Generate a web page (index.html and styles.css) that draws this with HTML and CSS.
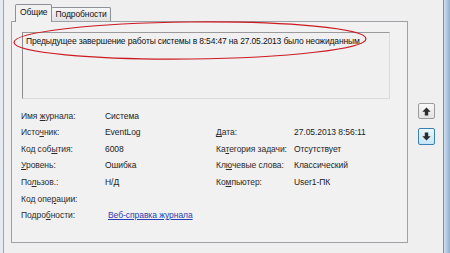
FILE: index.html
```html
<!DOCTYPE html>
<html lang="ru">
  <head>
    <meta charset="UTF-8" />
    <meta name="viewport" content="width=device-width, initial-scale=1.0" />
    <title>Свойства события</title>

    <link rel="stylesheet" href="styles.css">
  </head>
  <body>
    <div class="window">
      <div class="frame_left"></div>

      <div class="client">
        <div class="tabs_col">
          <div class="tabs">
            <span class="tab active">Общие</span>
            <span class="tab">Подробности</span>
          </div>

          <div class="panel">
            <div class="message">
              Предыдущее завершение работы системы в 8:54:47 на 27.05.2013 было неожиданным.
            </div>

            <div class="props">
              <span class="label">Имя <u>ж</u>урнала:</span>
              <span class="value">Система</span>
              <span></span>
              <span></span>

              <span class="label">Исто<u>ч</u>ник:</span>
              <span class="value">EventLog</span>
              <span class="label"><u>Д</u>ата:</span>
              <span class="value">27.05.2013 8:56:11</span>

              <span class="label">Код соб<u>ы</u>тия:</span>
              <span class="value">6008</span>
              <span class="label">Ка<u>т</u>егория задачи:</span>
              <span class="value">Отсутствует</span>

              <span class="label"><u>У</u>ровень:</span>
              <span class="value">Ошибка</span>
              <span class="label">Кл<u>ю</u>чевые слова:</span>
              <span class="value">Классический</span>

              <span class="label">По<u>л</u>ьзов.:</span>
              <span class="value">Н/Д</span>
              <span class="label">Ко<u>м</u>пьютер:</span>
              <span class="value">User1-ПК</span>

              <span class="label">Код опе<u>р</u>ации:</span>
              <span class="value"></span>
              <span></span>
              <span></span>

              <span class="label">Подро<u>б</u>ности:</span>
              <a href="#" class="value link">Веб-справка журнала</a>
              <span></span>
              <span></span>
            </div>
          </div>
        </div>

        <div class="side">
          <button class="nav_btn">
            <svg width="9" height="9" viewBox="0 0 9 9">
              <path d="M4.5 0.5 L8.7 4.8 H6.2 V8.6 H2.8 V4.8 H0.3 Z" />
            </svg>
          </button>
          <button class="nav_btn hovered">
            <svg width="9" height="9" viewBox="0 0 9 9">
              <path d="M4.5 8.5 L8.7 4.2 H6.2 V0.4 H2.8 V4.2 H0.3 Z" />
            </svg>
          </button>
        </div>
      </div>

      <div class="frame_right"></div>

      <!-- red hand-drawn mark over the message -->
      <svg class="mark" width="450" height="253" viewBox="0 0 450 253">
        <ellipse cx="190" cy="40.5" rx="176" ry="18.5" transform="rotate(-0.6 190 40.5)" />
      </svg>
    </div>
  </body>
</html>
```

FILE: styles.css
```css
* {
  margin: 0;
  padding: 0;
  box-sizing: border-box;
}

body {
  width: 450px;
  height: 253px;
  overflow: hidden;
  background-color: #efefef;
  font-family: "Liberation Sans", "DejaVu Sans", sans-serif;
  font-size: 8.5px;
  color: #222;
}

.window {
  width: 450px;
  height: 253px;
  display: flex;
  position: relative;

  .frame_left {
    width: 4px;
    background-color: #e6ebf1;
    border-right: 1px solid #9ca8b8;
  }

  .frame_right {
    width: 7px;
    border-left: 1px solid #7d8ea5;
    background: linear-gradient(to right, #cfdff0, #a9c1dc 60%, #93acca);
  }

  .mark {
    position: absolute;
    top: 0;
    left: 0;
    pointer-events: none;

    ellipse {
      fill: none;
      stroke: #cc1a22;
      stroke-width: 1.2;
    }
  }
}

.client {
  width: 439px;
  display: flex;
  padding: 4px 0 0 7px;

  .tabs_col {
    width: 397px;
    display: flex;
    flex-direction: column;
  }

  .side {
    width: 35px;
    display: flex;
    flex-direction: column;
    gap: 9px;
    padding: 99px 0 0 10px;
  }
}

.tabs {
  display: flex;
  align-items: flex-end;
  padding-left: 4px;
  height: 17px;

  .tab {
    height: 14px;
    line-height: 13px;
    padding: 0 3px;
    border: 1px solid #8d9195;
    border-bottom: none;
    border-radius: 2px 2px 0 0;
    background: linear-gradient(#f6f6f6, #e1e1e1);
    color: #111;
    margin-left: -1px;
    letter-spacing: -0.1px;
  }

  .active {
    height: 18px;
    line-height: 15px;
    margin-bottom: -1px;
    padding: 0 4px 2px;
    background: #f1f1f1;
    position: relative;
    z-index: 1;
    margin-left: 0;
  }
}

.panel {
  height: 222px;
  border: 1px solid #9da0a4;
  background-color: #f1f1f1;
  padding: 10px 0 0 9px;

  .message {
    width: 368px;
    height: 67px;
    margin-left: 1px;
    padding: 2px 3px;
    line-height: 12px;
    letter-spacing: -0.15px;
    border: 1px solid;
    border-color: #9a9a9a #dadada #dadada #8c8c8c;
    background-color: #f0f0f0;
    color: #111;
  }

  .props {
    display: grid;
    grid-template-columns: 84px 111px 78px auto;
    grid-auto-rows: 16.6px;
    margin-top: 8.7px;
    line-height: 16.6px;
    letter-spacing: -0.05px;

    .label {
      color: #2b2b2b;
      white-space: nowrap;
    }

    .value {
      color: #1c1c1c;
      white-space: nowrap;
    }

    .link {
      color: #2a3fb4;
      text-decoration: underline;
      margin-left: 3px;
    }
  }
}

.nav_btn {
  width: 17px;
  height: 16px;
  display: flex;
  justify-content: center;
  align-items: center;
  border: 1px solid #9b9b9b;
  border-radius: 2px;
  background: linear-gradient(#f8f8f8, #e2e2e2);

  svg path {
    fill: #2b2b2b;
  }
}

.hovered {
  height: 17px;
  border-color: #3c7fb1;
  background: linear-gradient(#eaf6fd, #c6e5f7);
}
```
